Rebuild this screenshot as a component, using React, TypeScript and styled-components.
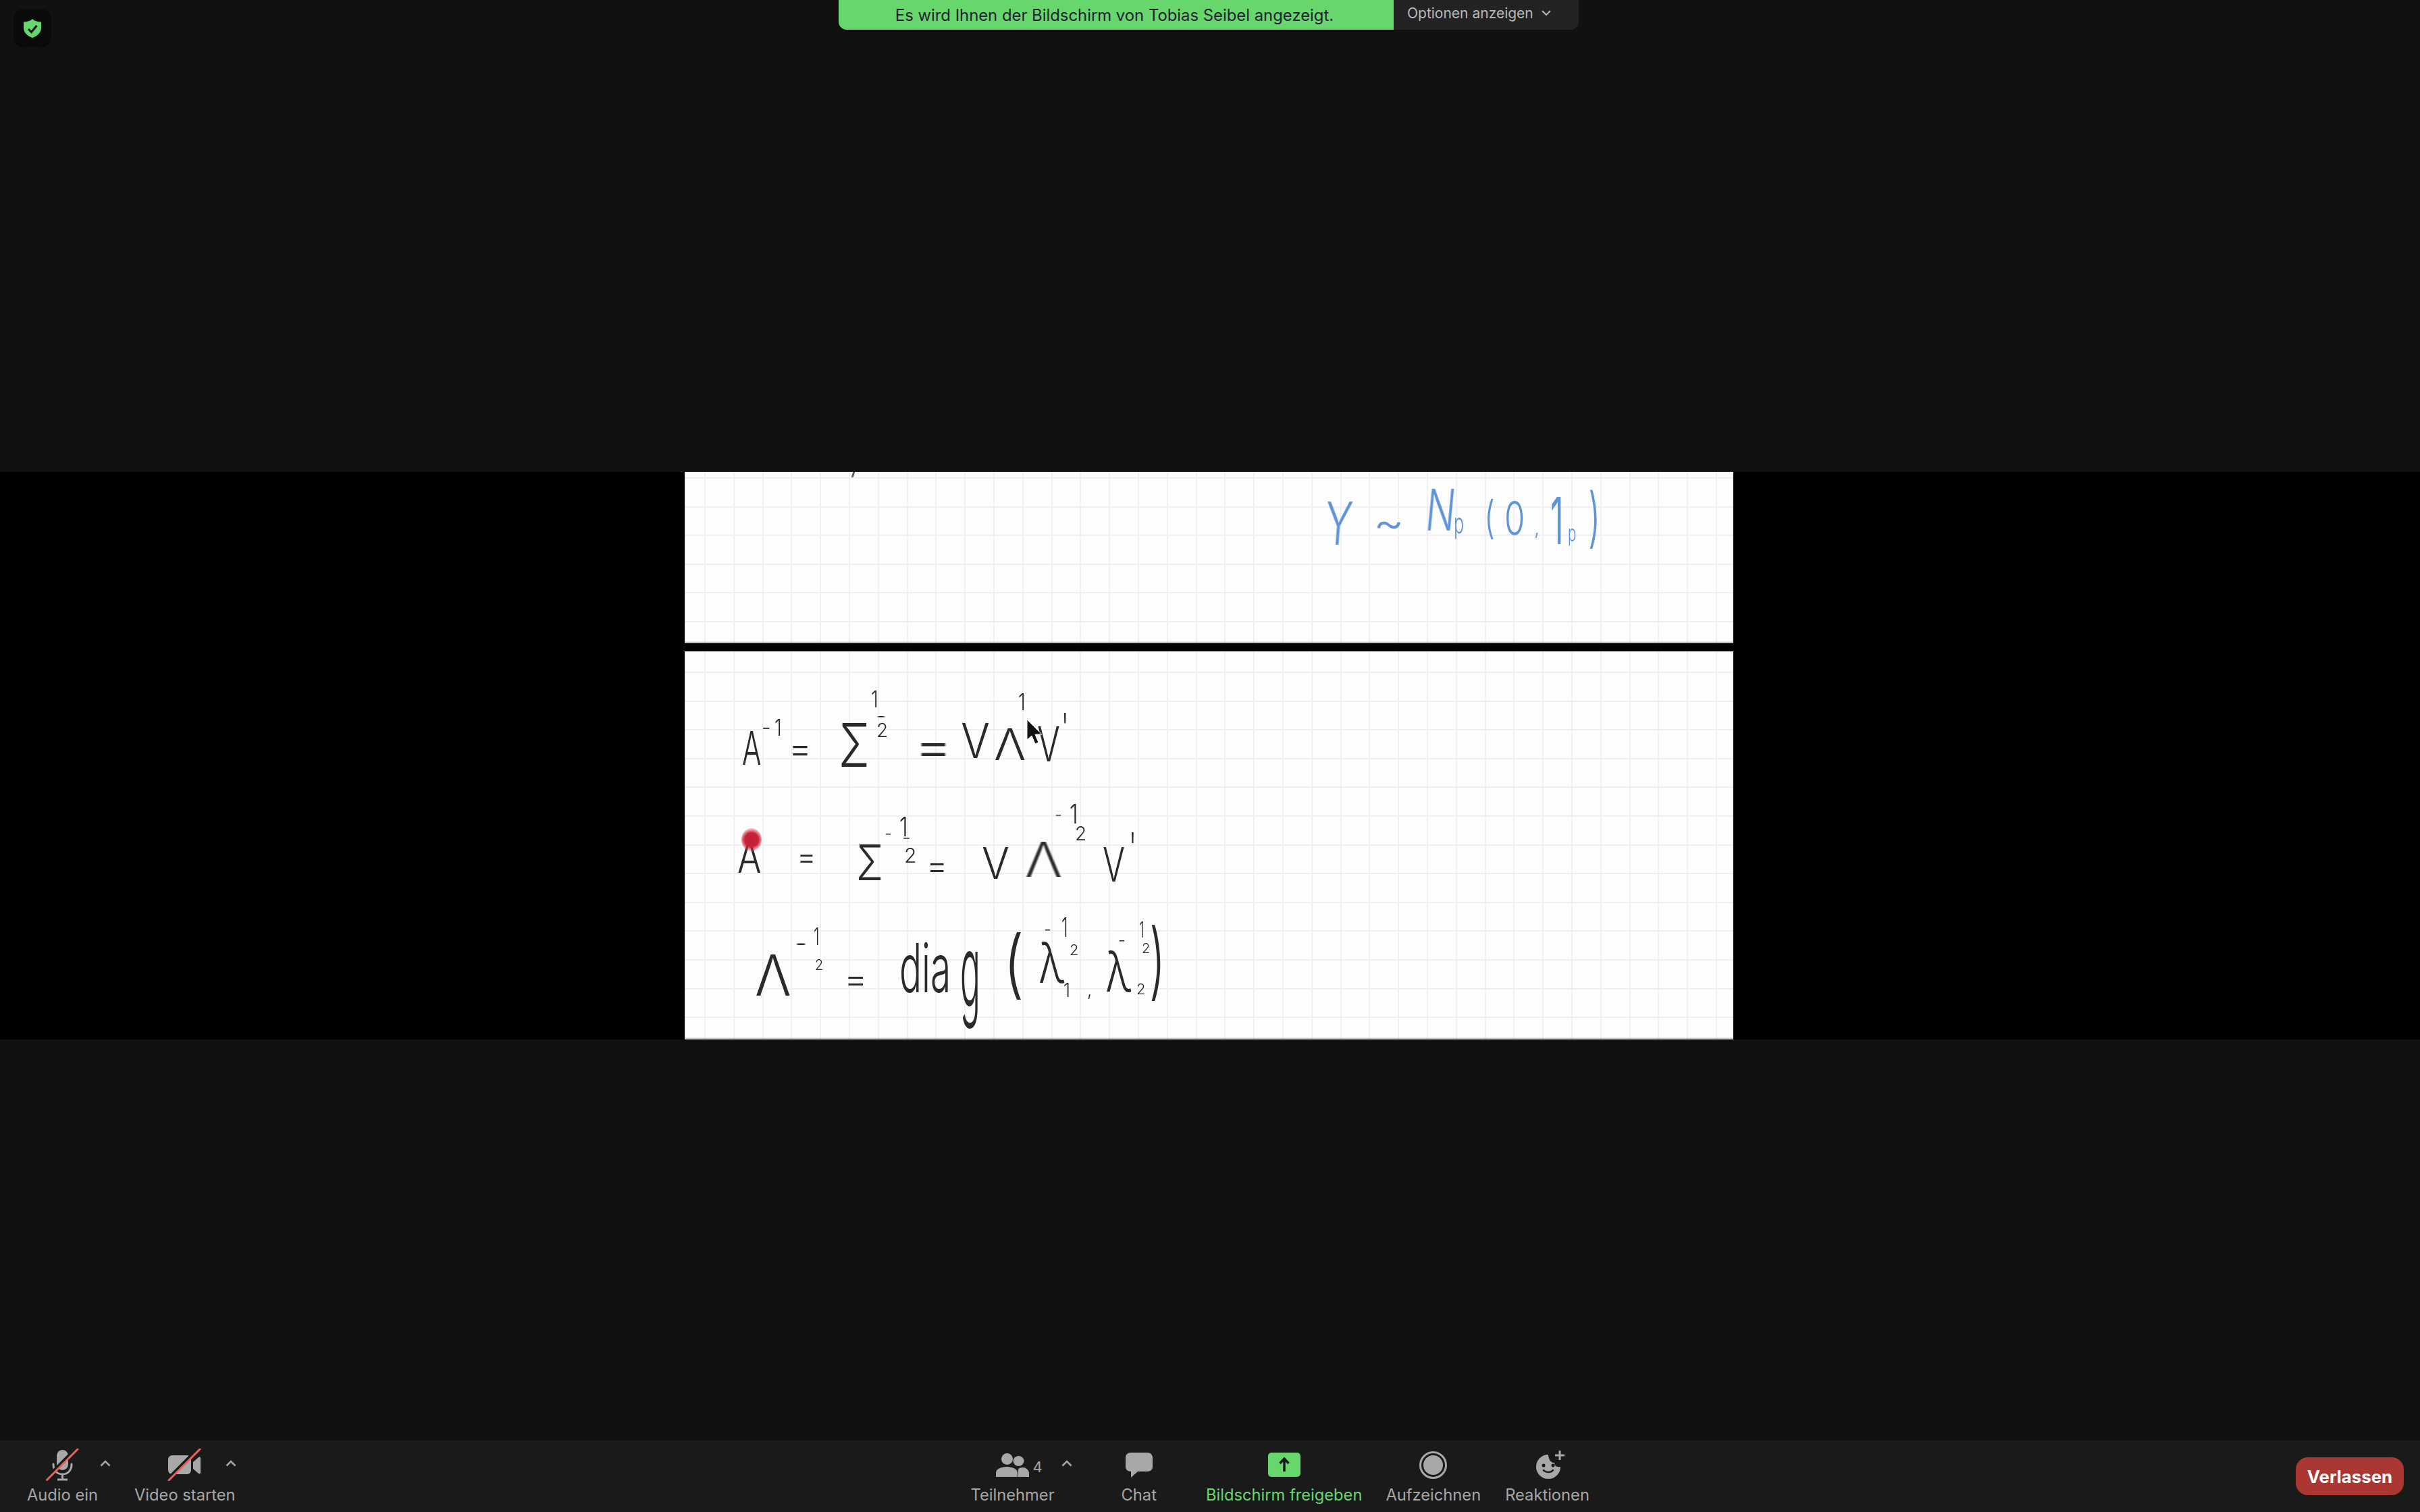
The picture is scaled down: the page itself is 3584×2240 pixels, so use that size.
import React from "react";
import styled, { createGlobalStyle } from "styled-components";

const GlobalStyle = createGlobalStyle`
    html, body {
        margin: 0;
        padding: 0;
        background: #111111;
        font-family: Inter, "Liberation Sans", sans-serif;
    }
`;

const Page = styled.div`
    display: flex;
    flex-direction: column;
    width: 3584px;
    height: 2240px;
    overflow: hidden;
`;

const Stage = styled.main`
    position: relative;
    flex: 1;
    padding-top: 699px;
    background: #111111;
`;

const Badge = styled.div`
    position: absolute;
    left: 20px;
    top: 14px;
    width: 56px;
    height: 56px;
    display: flex;
    align-items: center;
    justify-content: center;
    border-radius: 14px;
    background: #0a0a0a;
`;

const Banner = styled.div`
    position: absolute;
    left: 1242px;
    top: 0;
    display: flex;
    height: 44px;
    border-radius: 0 0 12px 12px;
    overflow: hidden;
`;

const BannerText = styled.div`
    width: 822px;
    display: flex;
    align-items: center;
    justify-content: center;
    padding-right: 5px;
    box-sizing: border-box;
    background: #67d76d;
    color: #232333;
    font-size: 23.850px;
`;

const BannerOptions = styled.div`
    width: 274px;
    display: flex;
    align-items: center;
    gap: 12px;
    padding-left: 20px;
    padding-bottom: 6px;
    box-sizing: border-box;
    background: #232325;
    color: #b8b8b8;
    font-size: 21px;
`;

const VideoBand = styled.div`
    height: 841px;
    display: flex;
    justify-content: center;
    background: #000000;
    padding-right: 3px;
    box-sizing: border-box;
`;

const Slide = styled.div`
    width: 1553px;
    display: flex;
    flex-direction: column;
    gap: 12px;
`;

const Board = styled.div<{ $height: number; $lineOffset: number }>`
    position: relative;
    flex: none;
    height: ${p => p.$height}px;
    overflow: hidden;
    background-color: #fdfdfe;
    background-image:
        repeating-linear-gradient(to bottom, transparent 0, transparent ${p => p.$lineOffset - 1}px, #eeeef3 ${p => p.$lineOffset - 1}px, #eeeef3 ${p => p.$lineOffset + 1}px, transparent ${p => p.$lineOffset + 1}px, transparent 42.6px),
        repeating-linear-gradient(to right, transparent 0, transparent 29px, #f1f1f5 29px, #f1f1f5 31px, transparent 31px, transparent 42.8px);
    box-shadow: inset 0 -2px 2px rgba(110, 110, 110, 0.5);
`;

const Glyph = styled.span<{ $x: number; $y: number; $s: number; $sx: number; $sk: number; $blue?: boolean; $w: number }>`
    position: absolute;
    left: ${p => p.$x}px;
    top: ${p => p.$y - p.$s * 0.36}px;
    height: 0;
    line-height: 0;
    white-space: nowrap;
    font-size: ${p => p.$s}px;
    font-weight: ${p => p.$w};
    color: ${p => (p.$blue ? "#5f93da" : "#2a2a2c")};
    transform-origin: 0 0;
    transform: scaleX(${p => p.$sx}) skewX(${p => p.$sk}deg);
    filter: blur(0.7px);
`;

const PenTail = styled.div`
    position: absolute;
    left: 248px;
    top: 0;
    width: 3px;
    height: 8px;
    background: #55555a;
    transform: skewX(-18deg);
    filter: blur(0.7px);
`;

const LaserDot = styled.div`
    position: absolute;
    left: 84px;
    top: 262px;
    width: 30px;
    height: 34px;
    border-radius: 50%;
    background: radial-gradient(circle, #c01f35 0, #c4233a 45%, rgba(230, 60, 80, 0.35) 70%, rgba(255, 255, 255, 0) 100%);
`;

const Pointer = styled.svg`
    position: absolute;
    left: 506px;
    top: 100px;
`;

const Toolbar = styled.footer`
    height: 106px;
    flex: none;
    display: flex;
    align-items: flex-start;
    padding: 11px 24px 0 40px;
    box-sizing: border-box;
    background: #1a1a1a;
`;

const Tool = styled.div<{ $gap?: number }>`
    position: relative;
    display: flex;
    flex-direction: column;
    align-items: center;
    margin-left: ${p => p.$gap ?? 0}px;
`;

const ToolIcon = styled.div`
    height: 50px;
    display: flex;
    align-items: center;
    justify-content: center;
`;

const ToolLabel = styled.span<{ $active?: boolean }>`
    margin-top: 6px;
    font-size: 23.700px;
    line-height: 28px;
    white-space: nowrap;
    color: ${p => (p.$active ? "#67d76d" : "#a6a6a6")};
`;

const Caret = styled.svg<{ $left: number; $top: number }>`
    position: absolute;
    left: ${p => p.$left}px;
    top: ${p => p.$top}px;
`;

const Count = styled.span`
    position: absolute;
    left: 92px;
    top: 16px;
    font-size: 22px;
    line-height: 24px;
    color: #a6a6a6;
`;

const LeaveButton = styled.button`
    margin: 14px 0 0 auto;
    width: 160px;
    height: 56px;
    border: none;
    border-radius: 18px;
    background: #aa3731;
    color: #ffffff;
    font-family: inherit;
    font-size: 25.800px;
    font-weight: 700;
`;

const GREY = "#a8a8a8";

const Slash = ({ x1, y1, x2, y2 }: { x1: number; y1: number; x2: number; y2: number }) => (
    <>
        <line x1={x1 - 2} y1={y1 - 2} x2={x2 - 2} y2={y2 - 2} stroke="#1a1a1a" strokeWidth="4" />
        <line x1={x1} y1={y1} x2={x2} y2={y2} stroke="#e8625c" strokeWidth="3" strokeLinecap="round" />
    </>
);

const MicIcon = () => (
    <svg width="50" height="48" viewBox="0 0 50 48">
        <rect x="16" y="2" width="17" height="30" rx="8.5" fill={GREY} />
        <path d="M11 23c0 9 5 15 13.500 15S38 32 38 23" fill="none" stroke={GREY} strokeWidth="3" strokeLinecap="round" />
        <path d="M24.500 38v8M17 46h15" fill="none" stroke={GREY} strokeWidth="3" />
        <Slash x1={1.500} y1={46.500} x2={47} y2={1} />
    </svg>
);

const CameraIcon = () => (
    <svg width="60" height="48" viewBox="0 0 60 48">
        <rect x="5" y="10" width="34" height="28" rx="6" fill={GREY} />
        <path d="M42 20l8-7c1.500-1 3-.5 3 1.500v21c0 2-1.500 2.500-3 1.500l-8-7z" fill={GREY} />
        <Slash x1={6} y1={47} x2={52} y2={1} />
    </svg>
);

const PeopleIcon = () => (
    <svg width="49" height="35" viewBox="0 0 49 35">
        <ellipse cx="33.500" cy="11.500" rx="8" ry="7.500" fill={GREY} />
        <path d="M33 35V23.500c1-1.500 3-2.500 7-2.500 5 0 9 4 9 9v5z" fill={GREY} />
        <ellipse cx="16.500" cy="8.500" rx="8.500" ry="8.500" fill={GREY} />
        <path d="M0 35v-6c0-5.500 7-9 16-9s16 3.500 16 9v6z" fill={GREY} />
    </svg>
);

const ChatIcon = () => (
    <svg width="40" height="37" viewBox="0 0 40 37">
        <path d="M8 0h24c5 0 8 3 8 8v13c0 4-3 7-8 7H18L8 37v-9c-5 0-8-3-8-7V8c0-5 3-8 8-8z" fill={GREY} />
    </svg>
);

const ShareIcon = () => (
    <svg width="48" height="36" viewBox="0 0 48 36">
        <rect width="48" height="36" rx="5" fill="#67d76d" />
        <path d="M24 28V10M17.500 16L24 9l6.500 7" fill="none" stroke="#1a1a1a" strokeWidth="3.500" />
    </svg>
);

const RecordIcon = () => (
    <svg width="41" height="41" viewBox="0 0 41 41">
        <circle cx="20.500" cy="20.500" r="19" fill="none" stroke={GREY} strokeWidth="3" />
        <circle cx="20.500" cy="20.500" r="14.500" fill={GREY} />
    </svg>
);

const ReactionIcon = () => (
    <svg width="50" height="42" viewBox="0 0 50 42">
        <path d="M26 6a18 18 0 1 0 18 18c-6 1-9-2-9-6-5 1-9-6-9-12z" fill={GREY} />
        <circle cx="19" cy="22" r="2.500" fill="#1a1a1a" />
        <circle cx="33" cy="22" r="2.500" fill="#1a1a1a" />
        <path d="M19 29c3 4 11 4 14 0" fill="none" stroke="#1a1a1a" strokeWidth="2.500" strokeLinecap="round" />
        <path d="M43 0v14M36 7h14" stroke={GREY} strokeWidth="3" />
    </svg>
);

const ShieldIcon = () => (
    <svg width="26" height="28" viewBox="0 0 26 28">
        <path d="M13 0c2.500 2.500 6 4 13 4.500V13c0 7-5 12-13 15C5 25 0 20 0 13V4.500C7 4 10.500 2.500 13 0z" fill="#67d76d" />
        <path d="M7 15l4.500 4.500L19.500 10" fill="none" stroke="#111111" strokeWidth="3" />
    </svg>
);

const CaretUp = ({ left, top }: { left: number; top: number }) => (
    <Caret $left={left} $top={top} width="16" height="10" viewBox="0 0 16 10">
        <path d="M1.500 8.500L8 2l6.500 6.500" fill="none" stroke={GREY} strokeWidth="2.500" />
    </Caret>
);

type Mark = [string, number, number, number, number?, number?, number?];

// x, baseline and size of each handwritten mark, in page pixels
const topMarks: Mark[] = [
    ["Y", 1962, 807, 88, 0.7, -6],
    ["~", 2034, 798, 70, 1],
    ["N", 2112, 787, 85, 0.68, -8],
    ["p", 2153, 790, 42, 0.6],
    ["(", 2198, 790, 66, 0.7],
    ["0", 2228, 793, 70, 0.7],
    [",", 2272, 792, 30],
    ["1", 2296, 806, 96, 0.5, 0, 400],
    ["p", 2322, 802, 34, 0.6],
    [")", 2352, 800, 96, 0.55],
];

const lowerMarks: Mark[] = [
    ["A", 1099, 1132, 68, 0.62],
    ["-", 1128, 1088, 30],
    ["1", 1147, 1090, 34, 0.8],
    ["=", 1168, 1128, 52, 1],
    ["Σ", 1242, 1136, 89, 0.75],
    ["1", 1290, 1048, 34, 0.8],
    ["-", 1298, 1070, 26, 1.2],
    ["2", 1298, 1092, 28],
    ["=", 1354, 1131, 72, 1.2],
    ["V", 1423, 1123, 71, 0.9],
    ["Λ", 1472, 1126, 64, 1.1],
    ["1", 1508, 1052, 34, 0.8],
    ["V", 1536, 1128, 72, 0.7],
    ["'", 1572, 1100, 60, 0.6],

    ["A", 1092, 1293, 66, 0.8],
    ["=", 1180, 1285, 44, 1],
    ["Σ", 1268, 1304, 73, 0.8],
    ["-", 1310, 1244, 24],
    ["1", 1332, 1239, 40, 0.8],
    ["-", 1336, 1250, 26, 1.1],
    ["2", 1339, 1278, 30],
    ["=", 1372, 1299, 48, 1],
    ["V", 1454, 1302, 64, 0.95],
    ["Λ", 1518, 1299, 71, 1.15],
    ["-", 1562, 1216, 24],
    ["1", 1584, 1220, 40, 0.8],
    ["2", 1592, 1245, 28],
    ["V", 1633, 1306, 70, 0.7],
    ["'", 1672, 1278, 62, 0.6, 0, 300],

    ["Λ", 1118, 1475, 84, 0.95, 0, 300],
    ["-", 1178, 1408, 30, 1.2, 0, 400],
    ["1", 1205, 1400, 36, 0.6],
    ["2", 1207, 1437, 22, 0.9],
    ["=", 1250, 1467, 48, 1.1],
    ["dia", 1332, 1470, 100, 0.55],
    ["g", 1422, 1492, 150, 0.33],
    ["(", 1486, 1466, 110, 0.8],
    ["λ", 1538, 1457, 82, 0.75],
    ["1", 1575, 1477, 28, 0.9],
    [",", 1610, 1476, 26],
    ["-", 1546, 1386, 24],
    ["1", 1572, 1388, 40, 0.6],
    ["2", 1584, 1415, 22],
    ["λ", 1637, 1470, 82, 0.75],
    ["2", 1683, 1473, 22],
    ["-", 1656, 1402, 24],
    ["1", 1687, 1390, 32, 0.6],
    ["2", 1691, 1412, 20],
    [")", 1702, 1466, 124, 0.55],
];

const Marks = ({ marks, top, blue }: { marks: Mark[]; top: number; blue?: boolean }) => (
    <>
        {marks.map(([text, x, y, s, sx = 1, sk = 0, w = 300], i) => (
            <Glyph key={i} $x={x - 1014} $y={y - top} $s={s} $sx={sx} $sk={sk} $w={w} $blue={blue}>
                {text}
            </Glyph>
        ))}
    </>
);

export default function App() {
    return (
        <Page>
            <GlobalStyle />
            <Stage>
                <Badge>
                    <ShieldIcon />
                </Badge>
                <Banner>
                    <BannerText>Es wird Ihnen der Bildschirm von Tobias Seibel angezeigt.</BannerText>
                    <BannerOptions>
                        Optionen anzeigen
                        <svg width="14" height="10" viewBox="0 0 14 10">
                            <path d="M1 2l6 6 6-6" fill="none" stroke="#b8b8b8" strokeWidth="2" />
                        </svg>
                    </BannerOptions>
                </Banner>
                <VideoBand>
                    <Slide>
                        <Board $height={254} $lineOffset={9}>
                            <PenTail />
                            <Marks marks={topMarks} top={699} blue />
                        </Board>
                        <Board $height={575} $lineOffset={31}>
                            <Marks marks={lowerMarks} top={965} />
                            <LaserDot />
                            <Pointer width="24" height="40" viewBox="0 0 24 40">
                                <path d="M1 1v30l7-6 5 12 5-2-5-12h10z" fill="#111111" stroke="#ffffff" strokeWidth="1" />
                            </Pointer>
                        </Board>
                    </Slide>
                </VideoBand>
            </Stage>
            <Toolbar>
                <Tool>
                    <ToolIcon><MicIcon /></ToolIcon>
                    <ToolLabel>Audio ein</ToolLabel>
                    <CaretUp left={108} top={18} />
                </Tool>
                <Tool $gap={54}>
                    <ToolIcon><CameraIcon /></ToolIcon>
                    <ToolLabel>Video starten</ToolLabel>
                    <CaretUp left={135} top={18} />
                </Tool>
                <Tool $gap={1089}>
                    <ToolIcon><PeopleIcon /></ToolIcon>
                    <Count>4</Count>
                    <ToolLabel>Teilnehmer</ToolLabel>
                    <CaretUp left={134} top={18} />
                </Tool>
                <Tool $gap={99}>
                    <ToolIcon><ChatIcon /></ToolIcon>
                    <ToolLabel>Chat</ToolLabel>
                </Tool>
                <Tool $gap={73}>
                    <ToolIcon><ShareIcon /></ToolIcon>
                    <ToolLabel $active>Bildschirm freigeben</ToolLabel>
                </Tool>
                <Tool $gap={35}>
                    <ToolIcon><RecordIcon /></ToolIcon>
                    <ToolLabel>Aufzeichnen</ToolLabel>
                </Tool>
                <Tool $gap={36}>
                    <ToolIcon><ReactionIcon /></ToolIcon>
                    <ToolLabel>Reaktionen</ToolLabel>
                </Tool>
                <LeaveButton>Verlassen</LeaveButton>
            </Toolbar>
        </Page>
    );
}
